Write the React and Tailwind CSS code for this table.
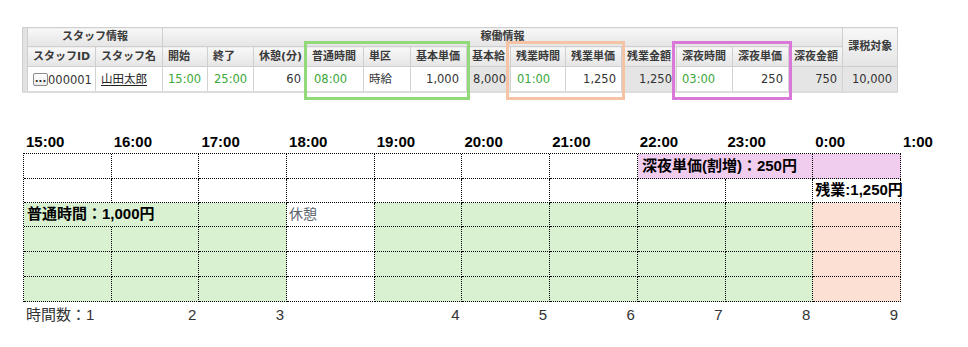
import React from "react";

const TH =
  "border border-[#cfcfcf] bg-linear-to-b from-[#f8f8f8] to-[#e5e5e5] px-[5px] font-bold text-[#3a3a3a] whitespace-nowrap overflow-hidden";
const TDW = "border border-[#d2d2d2] bg-white whitespace-nowrap overflow-hidden";
const TDG = "border border-[#d2d2d2] bg-[#e5e5e5] whitespace-nowrap overflow-hidden";
const GREEN = "text-[#3aa83a]";

function TopTable() {
  return (
    <div className="relative">
      <div className="pt-[27px] pl-[22px]">
        <table className="table-fixed border-collapse w-[875px] text-[11px] leading-[14px] font-['DejaVu_Sans','Noto_Sans_CJK_JP',sans-serif] border-b-2 border-b-[#dcdcdc]">
          <colgroup>
            <col className="w-[5px]" />
            <col className="w-[68px]" />
            <col className="w-[67px]" />
            <col className="w-[45px]" />
            <col className="w-[46px]" />
            <col className="w-[53px]" />
            <col className="w-[57px]" />
            <col className="w-[47px]" />
            <col className="w-[56px]" />
            <col className="w-[44px]" />
            <col className="w-[55px]" />
            <col className="w-[56px]" />
            <col className="w-[55px]" />
            <col className="w-[56px]" />
            <col className="w-[56px]" />
            <col className="w-[54px]" />
            <col className="w-[55px]" />
          </colgroup>
          <tbody>
            <tr className="h-[19px]">
              <th rowSpan={3} className="border border-[#cfcfcf] bg-[#e2e2e2] p-0"></th>
              <th colSpan={2} className={TH + " text-center"}>スタッフ情報</th>
              <th colSpan={13} className={TH + " text-center"}>稼働情報</th>
              <th rowSpan={2} className={TH + " text-center"}>課税対象</th>
            </tr>
            <tr className="h-[20px]">
              <th className={TH + " text-left"}>スタッフID</th>
              <th className={TH + " text-left"}>スタッフ名</th>
              <th className={TH + " text-left"}>開始</th>
              <th className={TH + " text-left"}>終了</th>
              <th className={TH + " text-left"}>休憩(分)</th>
              <th className={TH + " text-left"}>普通時間</th>
              <th className={TH + " text-left"}>単区</th>
              <th className={TH + " text-left"}>基本単価</th>
              <th className={TH + " text-left"}>基本給</th>
              <th className={TH + " text-left"}>残業時間</th>
              <th className={TH + " text-left"}>残業単価</th>
              <th className={TH + " text-left"}>残業金額</th>
              <th className={TH + " text-left"}>深夜時間</th>
              <th className={TH + " text-left"}>深夜単価</th>
              <th className={TH + " text-left"}>深夜金額</th>
            </tr>
            <tr className="h-[25px] text-[11.5px] text-[#333]">
              <td className={TDW + " pl-[5px]"}>
                <span className="inline-flex items-center">
                  <span className="inline-flex items-end justify-center w-[15px] h-[13px] border border-[#8a8a8a] rounded-[2px] bg-linear-to-b from-white to-[#ececec] text-[10px] leading-[10px] font-bold text-[#333] pb-[1px]">
                    ...
                  </span>
                  <span>000001</span>
                </span>
              </td>
              <td className={TDW + " pl-[5px]"}>
                <span className="underline underline-offset-2 text-[#222]">山田太郎</span>
              </td>
              <td className={TDW + " pl-[5px] " + GREEN}>15:00</td>
              <td className={TDW + " pl-[6px] " + GREEN}>25:00</td>
              <td className={TDW + " pr-[5px] text-right"}>60</td>
              <td className={TDW + " pl-[7px] " + GREEN}>08:00</td>
              <td className={TDW + " pl-[5px]"}>時給</td>
              <td className={TDW + " pr-[7px] text-right"}>1,000</td>
              <td className={TDG + " pr-[4px] text-right"}>8,000</td>
              <td className={TDW + " pl-[6px] " + GREEN}>01:00</td>
              <td className={TDW + " pr-[5px] text-right"}>1,250</td>
              <td className={TDG + " pr-[4px] text-right"}>1,250</td>
              <td className={TDW + " pl-[5px] " + GREEN}>03:00</td>
              <td className={TDW + " pr-[5px] text-right"}>250</td>
              <td className={TDG + " pr-[5px] text-right"}>750</td>
              <td className={TDG + " pr-[5px] text-right"}>10,000</td>
            </tr>
          </tbody>
        </table>
      </div>
      {/* highlight boxes */}
      <div className="absolute left-[304px] top-[41px] w-[166px] h-[59px] border-[3px] border-[#92d97a]"></div>
      <div className="absolute left-[506px] top-[41px] w-[119px] h-[59px] border-[3px] border-[#f6c4a4]"></div>
      <div className="absolute left-[672px] top-[41px] w-[120px] h-[59px] border-[3px] border-[#d978d6]"></div>
    </div>
  );
}

const C = "border-r border-b border-dotted border-black";
const G = "bg-[#d9f1d0]";
const P = "bg-[#f0ccef]";
const O = "bg-[#fce0d3]";
const W = "bg-white";

function Timeline() {
  const hours = ["15:00", "16:00", "17:00", "18:00", "19:00", "20:00", "21:00", "22:00", "23:00", "0:00", "1:00"];
  const counts = ["", "2", "3", "", "4", "5", "6", "7", "8", "9"];
  const lowerRow = [G, G, G, W, G, G, G, G, G, O];
  return (
    <div className="ml-[23px] mt-[40px] font-['Liberation_Sans','Noto_Sans_CJK_JP',sans-serif] text-black">
      <div className="grid grid-cols-[repeat(11,87.7px)] h-[20px] items-start">
        {hours.map((h) => (
          <div key={h} className="pl-[3px] text-[15px] leading-[18px] font-bold whitespace-nowrap">
            {h}
          </div>
        ))}
      </div>
      <div className="grid grid-cols-10 grid-rows-[25px_24px_24px_25px_25px_25px] w-[878px] border-l border-t border-dotted border-black text-[15px] leading-[18px]">
        {[0, 1, 2, 3, 4, 5, 6].map((i) => (
          <div key={"r1" + i} className={C + " " + W}></div>
        ))}
        <div className={C + " " + P + " col-span-2 flex items-center pl-[4px] font-bold whitespace-nowrap"}>
          深夜単価(割増)：250円
        </div>
        <div className={C + " " + P}></div>
        {[0, 1, 2, 3, 4, 5, 6, 7, 8].map((i) => (
          <div key={"r2" + i} className={C + " " + W}></div>
        ))}
        <div className={C + " " + W + " flex items-center pl-[2px] font-bold whitespace-nowrap"}>残業:1,250円</div>
        <div className={C + " " + G + " col-span-2 flex items-center pl-[3px] font-bold whitespace-nowrap"}>
          普通時間：1,000円
        </div>
        <div className={C + " " + G}></div>
        <div className={C + " " + W + " flex items-center pl-[2px] text-[14px] text-[#5f6670]"}>休憩</div>
        {[0, 1, 2, 3, 4].map((i) => (
          <div key={"r3" + i} className={C + " " + G}></div>
        ))}
        <div className={C + " " + O}></div>
        {[4, 5, 6].map((r) =>
          lowerRow.map((bg, i) => <div key={"r" + r + "c" + i} className={C + " " + bg}></div>)
        )}
      </div>
      <div className="grid grid-cols-10 w-[878px] pl-[1px] mt-[4px] text-[15px] leading-[18px] text-[#333]">
        <div className="pl-[2px] whitespace-nowrap">時間数：1</div>
        {counts.slice(1).map((c, i) => (
          <div key={"n" + i} className="text-right pr-[3px]">
            {c}
          </div>
        ))}
      </div>
    </div>
  );
}

export default function App() {
  return (
    <div className="w-[968px] h-[347px] bg-white overflow-hidden">
      <TopTable />
      <Timeline />
    </div>
  );
}
